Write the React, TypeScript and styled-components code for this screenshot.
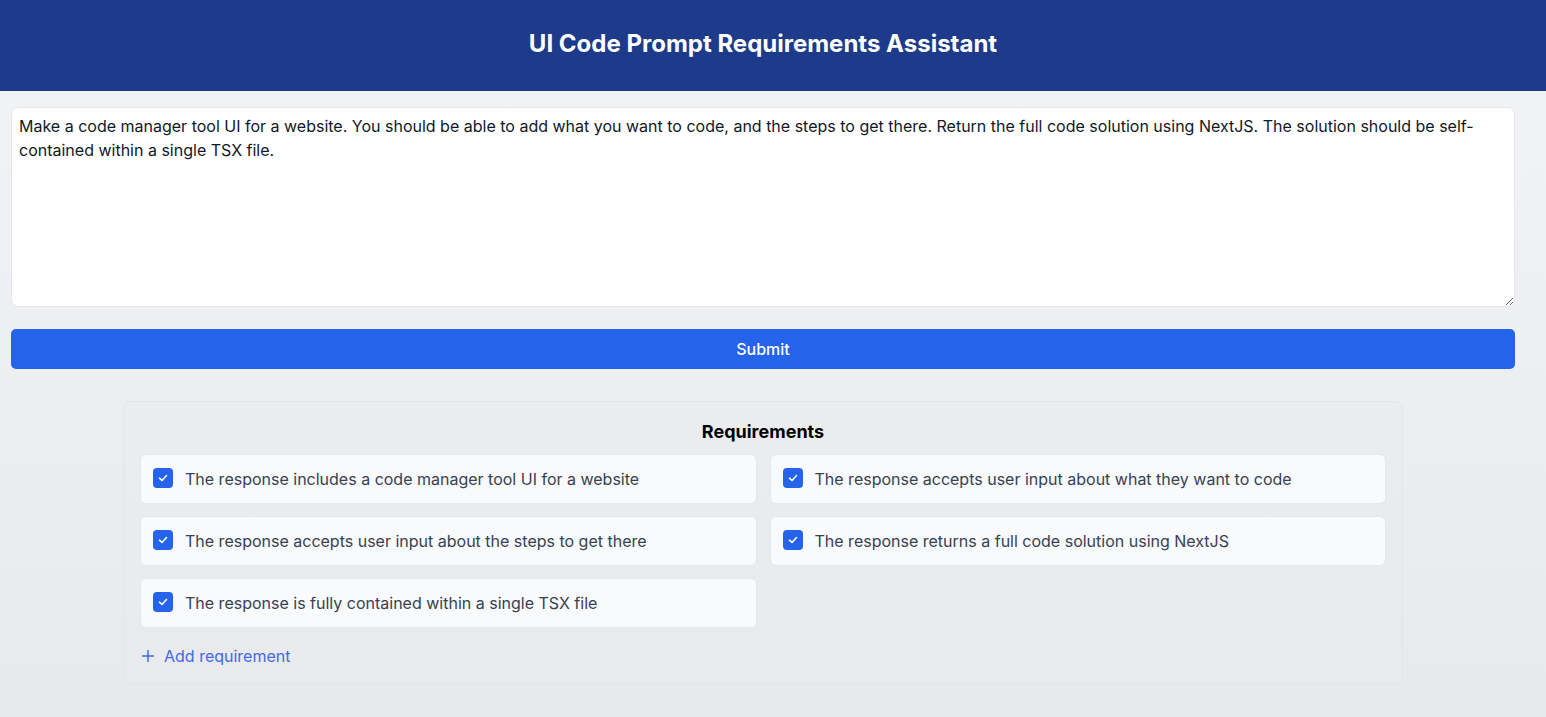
import React, { useState } from "react";
import styled, { createGlobalStyle } from "styled-components";

const GlobalStyle = createGlobalStyle`
  * { box-sizing: border-box; }
  html, body { margin: 0; padding: 0; }
  body {
    font-family: Inter, "Noto Sans", sans-serif;
    background: linear-gradient(to bottom, #f3f4f6, #e8e9ed);
    min-height: 100vh;
    color: #111827;
  }
`;

const Page = styled.div`
  min-height: 100vh;
  display: flex;
  flex-direction: column;
`;

const Header = styled.header`
  height: 91px;
  background: #1e3a8a;
  display: flex;
  align-items: center;
  justify-content: center;
  padding: 0 20px 4px 0;
`;

const Title = styled.h1`
  margin: 0;
  color: #ffffff;
  font-size: 24px;
  line-height: 32px;
  font-weight: 700;
`;

const Main = styled.main`
  padding: 16px 31px 32px 11px;
  display: flex;
  flex-direction: column;
`;

const PromptArea = styled.textarea`
  display: block;
  width: 100%;
  height: 200px;
  padding: 6px 7px;
  border: 1px solid #e5e7eb;
  border-radius: 7px;
  background: #ffffff;
  font-family: Inter, "Noto Sans", sans-serif;
  font-size: 16px;
  line-height: 24px;
  color: #111827;
  resize: vertical;
  outline: none;
  margin: 0 0 22px;
`;

const SubmitButton = styled.button`
  width: 100%;
  height: 40px;
  border: none;
  border-radius: 5px;
  background: #2563eb;
  color: #ffffff;
  font-family: Inter, "Noto Sans", sans-serif;
  font-size: 16px;
  font-weight: 500;
  cursor: pointer;
  margin-bottom: 32px;
`;

const Card = styled.section`
  width: 1280px;
  align-self: center;
  border: 1px solid #e3e5e9;
  border-radius: 8px;
  background: rgba(233, 234, 238, 0.45);
  padding: 16px;
`;

const CardTitle = styled.h2`
  margin: 0 0 8px;
  text-align: center;
  font-size: 18px;
  line-height: 28px;
  font-weight: 700;
  color: #000000;
`;

const Grid = styled.div`
  display: grid;
  grid-template-columns: 1fr 1fr;
  gap: 12px 13px;
`;

const Item = styled.label`
  display: flex;
  align-items: center;
  gap: 12px;
  padding: 12px;
  background: #f8fafc;
  border: 1px solid #e5e7eb;
  border-radius: 6px;
  font-size: 16px;
  line-height: 24px;
  color: #374151;
  cursor: pointer;
`;

const Box = styled.span<{ $checked: boolean }>`
  width: 20px;
  height: 20px;
  flex: none;
  border-radius: 4px;
  background: ${(p) => (p.$checked ? "#2563eb" : "#ffffff")};
  border: ${(p) => (p.$checked ? "none" : "1px solid #9ca3af")};
  display: flex;
  align-items: center;
  justify-content: center;
  margin-top: -2px;
`;

const AddButton = styled.button`
  margin-top: 16px;
  display: flex;
  align-items: center;
  gap: 10px;
  padding: 0 0 0 2px;
  border: none;
  background: none;
  font-family: Inter, "Noto Sans", sans-serif;
  font-size: 16px;
  line-height: 24px;
  color: #4169e8;
  cursor: pointer;
`;

const initial = [
  "The response includes a code manager tool UI for a website",
  "The response accepts user input about what they want to code",
  "The response accepts user input about the steps to get there",
  "The response returns a full code solution using NextJS",
  "The response is fully contained within a single TSX file",
];

export default function App() {
  const [checked, setChecked] = useState<boolean[]>(initial.map(() => true));
  const [prompt, setPrompt] = useState(
    "Make a code manager tool UI for a website. You should be able to add what you want to code, and the steps to get there. Return the full code solution using NextJS. The solution should be self-contained within a single TSX file."
  );

  return (
    <Page>
      <GlobalStyle />
      <Header>
        <Title>UI Code Prompt Requirements Assistant</Title>
      </Header>
      <Main>
        <PromptArea value={prompt} onChange={(e) => setPrompt(e.target.value)} />
        <SubmitButton>Submit</SubmitButton>
        <Card>
          <CardTitle>Requirements</CardTitle>
          <Grid>
            {initial.map((text, i) => (
              <Item
                key={text}
                onClick={() =>
                  setChecked((c) => c.map((v, j) => (j === i ? !v : v)))
                }
              >
                <Box $checked={checked[i]}>
                  {checked[i] && (
                    <svg width="12" height="12" viewBox="0 0 12 12" fill="none">
                      <path
                        d="M2.5 6.2 L5 8.5 L9.5 3.5"
                        stroke="#ffffff"
                        strokeWidth="1.6"
                        strokeLinecap="round"
                        strokeLinejoin="round"
                      />
                    </svg>
                  )}
                </Box>
                {text}
              </Item>
            ))}
          </Grid>
          <AddButton>
            <svg width="12" height="12" viewBox="0 0 12 12" fill="none">
              <path d="M6 0.5 V11.5 M0.5 6 H11.5" stroke="#4169e8" strokeWidth="1.5" strokeLinecap="round" />
            </svg>
            Add requirement
          </AddButton>
        </Card>
      </Main>
    </Page>
  );
}
